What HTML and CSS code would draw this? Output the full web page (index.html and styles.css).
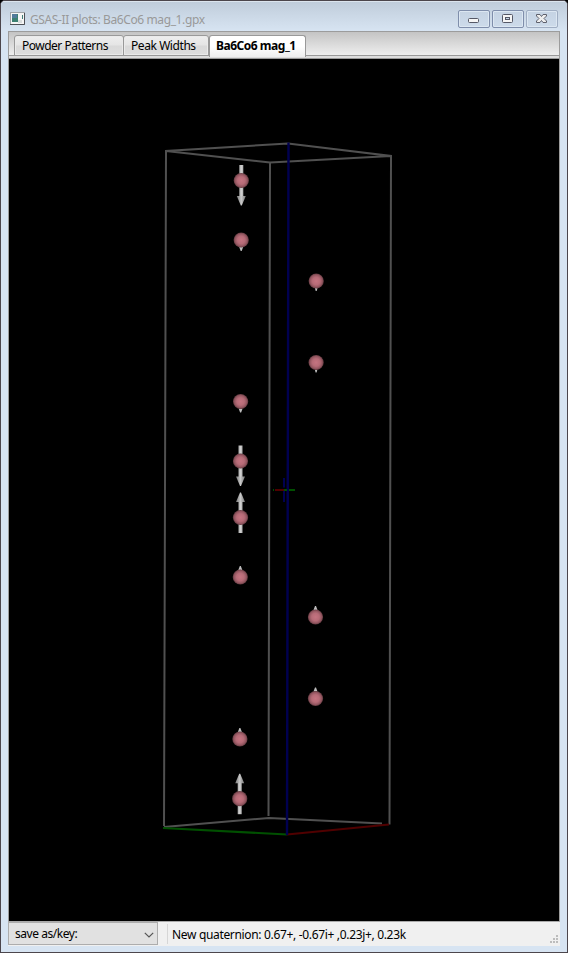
FILE: index.html
```
<!DOCTYPE html>
<html lang="en">
<head>
<meta charset="utf-8">
<title>GSAS-II plots: Ba6Co6 mag_1.gpx</title>
<link rel="stylesheet" href="styles.css">
</head>
<body>
<div class="window">
  <header class="titlebar">
    <svg class="app-icon" width="16" height="14" viewBox="0 0 16 14">
      <rect x=".5" y=".5" width="14" height="12" fill="#f5f5f5" stroke="#a0a3a7"/>
      <path d="M14.500 1V12.500H0" fill="none" stroke="#4e5157"/>
      <rect x="2" y="2" width="6" height="8" fill="#3c8072"/><path d="M2 2h5v4H2z" fill="#527b9b"/>
      <path d="M8 8h4v3H8z" fill="#d9dddd"/><path d="M12 3h1v4h-1z" fill="#417d78"/>
    </svg>
    <span class="title">GSAS-II plots: Ba6Co6 mag_1.gpx</span>
    <div class="controls">
      <button class="ctl" aria-label="Minimize"><svg width="30" height="16" viewBox="0 0 30 16"><rect x="9.500" y="7.500" width="10" height="4" rx="1" fill="#f5f5f5" stroke="#555866"/></svg></button>
      <button class="ctl" aria-label="Maximize"><svg width="30" height="16" viewBox="0 0 30 16"><rect x="9.500" y="3.500" width="10" height="8" rx="1" fill="#f5f5f5" stroke="#555866"/><rect x="12.500" y="6.500" width="4" height="2" fill="#c5d4e5" stroke="#555866"/></svg></button>
      <button class="ctl close" aria-label="Close"><svg width="30" height="16" viewBox="0 0 30 16"><path d="M9.500 3.500h3.500l1.500 2 1.500-2h3.500v1.500l-2.500 2.500 2.500 2.500v1.500h-3.500l-1.500-2-1.500 2h-3.500v-1.500l2.500-2.500-2.500-2.500z" fill="#eee" stroke="#5e606c"/></svg></button>
    </div>
  </header>
  <main class="client">
    <nav class="tabs">
      <div class="tab t1"><span>Powder Patterns</span></div>
      <div class="tab t2"><span>Peak Widths</span></div>
      <div class="tab active"><span>Ba6Co6 mag_1</span></div>
    </nav>
    <svg class="plot" width="550" height="862" viewBox="9 59 550 862">
      <defs>
        <radialGradient id="ball"><stop offset="0" stop-color="#c57481"/><stop offset=".5" stop-color="#b66b77"/><stop offset=".8" stop-color="#935660"/><stop offset="1" stop-color="#60383e"/></radialGradient>
        <linearGradient id="shaft"><stop offset="0" stop-color="#aaa"/><stop offset=".5" stop-color="#d0d0d0"/><stop offset="1" stop-color="#b0b0b0"/></linearGradient>
        <linearGradient id="head"><stop offset="0" stop-color="#777"/><stop offset=".5" stop-color="#c8c8c8"/><stop offset="1" stop-color="#777"/></linearGradient>
        <g id="atom"><circle r="7.600" fill="url(#ball)"/></g>
        <g id="moment"><rect x="-2" y="-15.500" width="4" height="32" fill="url(#shaft)"/><path d="M-4.500 15.500h9L.5 25h-1z" fill="url(#head)"/><use href="#atom"/></g>
        <g id="small"><path d="M-2 7h4L.5 11h-1z" fill="#bdbdbd"/><use href="#atom"/></g>
        <g id="tiny"><path d="M-1.300 7h2.600L.5 10h-1z" fill="#bdbdbd"/><use href="#atom"/></g>
      </defs>
      <rect x="9" y="59" width="550" height="862"/>
      <g fill="none" stroke="#505050" stroke-width="2">
        <path d="M164 826L166 151L288 143.500L391 156L389.500 824.500M166 151L270 162.500L391 156M270 162.500L268.500 816M164 827L269 818L382 823.500"/>
      </g>
      <path d="M163 828L287 834.500" stroke="#005000" stroke-width="2"/>
      <path d="M287 834.500L389 824.500" stroke="#500000" stroke-width="2"/>
      <path d="M288.500 142.500L287 835" stroke="#000050" stroke-width="2.400"/>
      <path d="M284 478v9.500M284 491v11" stroke="#000050" stroke-width="2"/>
      <path d="M275 490h9" stroke="#500000" stroke-width="2"/>
      <path d="M273 490h1M284 490h3M289 490h6" stroke="#005000" stroke-width="2"/>
      <use href="#moment" transform="translate(241.300 180.500)"/>
      <use href="#small" transform="translate(241.200 240)"/>
      <use href="#small" transform="translate(240.600 401.500)"/>
      <use href="#moment" transform="translate(240.500 461)"/>
      <use href="#moment" transform="translate(240.500 517.500) scale(1 -1)"/>
      <use href="#small" transform="translate(240.300 577) scale(1 -1)"/>
      <use href="#small" transform="translate(239.900 739) scale(1 -1)"/>
      <use href="#moment" transform="translate(239.700 798.700) scale(1 -1)"/>
      <use href="#tiny" transform="translate(316.200 281)"/>
      <use href="#tiny" transform="translate(316.100 362.500)"/>
      <use href="#small" transform="translate(315.500 617) scale(1 -1)"/>
      <use href="#small" transform="translate(315.500 698.500) scale(1 -1)"/>
    </svg>
    <footer class="status">
      <div class="select"><span>save as/key:</span><svg width="10" height="6" viewBox="0 0 10 6"><path d="M.8 .8L5 5L9.200 .8" fill="none" stroke="#555" stroke-width="1.200"/></svg></div>
      <div class="message"><span>New quaternion: 0.67+, -0.67i+ ,0.23j+, 0.23k</span></div>
      <svg class="grip" width="8" height="8" viewBox="0 0 8 8" fill="#bcbcbc"><path d="M6 0h2v2H6zM3 3h2v2H3zM6 3h2v2H6zM0 6h2v2H0zM3 6h2v2H3zM6 6h2v2H6z"/></svg>
    </footer>
  </main>
</div>
</body>
</html>
```
FILE: styles.css
```
* { box-sizing: border-box; }
body { margin: 0; background: #000; font: 12px/16px "Noto Sans", "Open Sans", sans-serif; color: #000; }
span { white-space: nowrap; }
.window { width: 568px; height: 953px; border: 1px solid #4c464c; border-radius: 5px 5px 0 0; background: #d7e4f2; padding: 0 7px; overflow: hidden; }
.titlebar { height: 30px; margin: 0 -7px; padding: 0 9px 0 9px; display: flex; align-items: flex-start; background: linear-gradient(#c0cddb, #d7e4f2); border-top: 1px solid #dce5ee; }
.app-icon { margin-top: 10px; }
.title { margin: 10px 0 0 4px; color: #999; letter-spacing: -.39px; }
.controls { display: flex; gap: 2px; margin: 8px 0 0 auto; }
.ctl { width: 32px; height: 18px; padding: 0; border: 1px solid #7f8eab; border-radius: 2px; background: linear-gradient(#c5d3e3, #cddbea); box-shadow: inset 0 0 0 1px #dce7f2; display: flex; }
.close { border-color: #a0aec3; }
.client { width: 552px; height: 915px; display: flex; flex-direction: column; border: 1px solid #9c9c9c; border-bottom: 0; }
.tabs { height: 27px; padding: 3px 5px 0; display: flex; background: linear-gradient(#c4c4c4, #eee 23px, #999 23px, #999 24px, #ddd 24px, #ddd 26px, #999 26px); }
.tab { height: 21px; border: 1px solid #999; border-radius: 3px 3px 0 0; padding: 2px 0 0 7px; background: linear-gradient(#eee, #e5e5e5 9px, #d9d9d9 10px, #dedede); box-shadow: inset 0 0 0 1px #eaeaea; }
.t1 { width: 110px; letter-spacing: -.5px; }
.t2 { width: 86px; margin-left: -1px; letter-spacing: -.43px; }
.active { width: 97px; height: 22px; background: linear-gradient(#fff, #fff 10px, #eee); border-bottom: 0; font-weight: bold; letter-spacing: -.48px; box-shadow: none; }
.active span { margin-left: -1px; }
.plot { display: block; flex: none; }
.status { height: 25px; display: flex; align-items: flex-start; background: #f0f0f0; border-top: 1px solid #aaa; margin: 0 -1px; }
.select { width: 150px; height: 23px; display: flex; justify-content: space-between; border: 1px solid #adadad; background: #e1e1e1; padding: 3px 3px 0 6px; letter-spacing: -.45px; }
.select svg { margin-top: 6px; }
.message { height: 20px; margin: 2px 0 0 9px; padding: 3px 0 0 4px; border-left: 1px solid #d6d6d6; letter-spacing: -.33px; }
.grip { margin: 13px 2px 0 auto; }
```
